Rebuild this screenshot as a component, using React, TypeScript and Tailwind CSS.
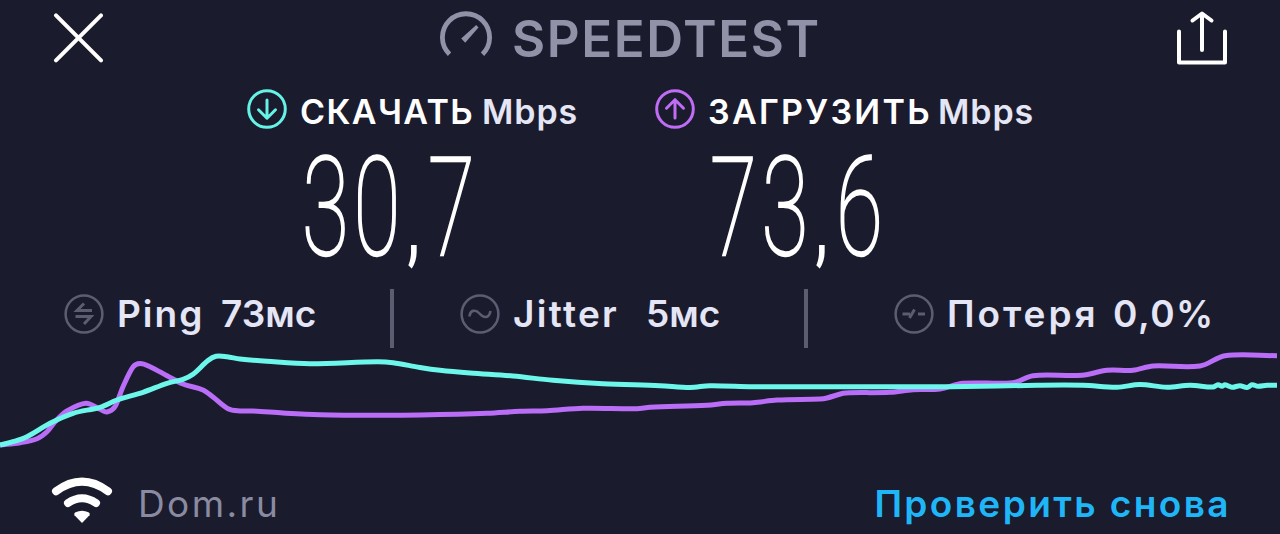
import type { ReactNode } from "react";

type Point = [number, number];

const downloadPoints: Point[] = [
  [0, 95], [13, 91.7], [27, 86.7], [50, 73.3], [73, 63.3], [100, 57.3], [117, 50], [143, 42.3],
  [167, 33.3], [183, 29.3], [193, 24.3], [208, 10.5], [216, 6.2], [227, 6.7], [240, 9], [267, 11.3],
  [310, 13.7], [377, 11.7], [393, 12.7], [420, 17.5], [440, 20.3], [470, 23], [513, 26],
  [553, 30.3], [603, 33.7], [660, 35.7], [690, 37.5], [710, 35.7], [753, 36.7], [850, 36.7],
  [950, 36.7], [1037, 35.3], [1083, 35.3], [1117, 37.3], [1140, 34.5], [1167, 37.3], [1190, 35.3],
  [1213, 37], [1218, 34.7], [1222, 36.3], [1225, 34.8], [1232, 37.3], [1240, 35.7], [1247, 37.5],
  [1252, 34.8], [1258, 36.3], [1267, 35.3], [1277, 35.3],
];

const uploadPoints: Point[] = [
  [0, 95], [20, 92.7], [37, 88.7], [47, 81.7], [55, 71.7], [67, 61], [86, 53.3], [100, 59.3],
  [107, 62], [115, 56.7], [123, 36.7], [133, 17], [140, 13.6], [150, 16.7], [167, 25.7], [183, 34],
  [203, 40], [213, 47], [228, 58.8], [240, 61], [253, 61], [283, 63], [320, 64.7], [377, 65.3],
  [420, 65], [487, 63.3], [520, 61.3], [547, 60.7], [583, 58.3], [637, 58.7], [650, 57.3],
  [707, 55.3], [727, 53.3], [753, 52.7], [777, 50], [820, 49], [827, 48], [843, 43.3], [850, 42.7],
  [890, 42.3], [913, 39.7], [940, 39], [963, 33.3], [1013, 32.7], [1033, 25.7], [1082, 25.3],
  [1107, 20.3], [1133, 20.3], [1153, 16], [1200, 16], [1225, 5.7], [1277, 5.7],
];

// Smooths the samples into bezier segments
const toPath = (points: Point[]) =>
  points.reduce((path, [x, y], i) => {
    if (i === 0) return `M${x} ${y}`;
    const [px, py] = points[i - 1];
    const [bx, by] = points[i - 2] ?? points[0];
    const [nx, ny] = points[i + 1] ?? points[i];
    const span = x - px;
    const startSlope = (y - by) / (x - bx || 1);
    const endSlope = (ny - py) / (nx - px || 1);
    return `${path}C${px + span / 3} ${py + (startSlope * span) / 3} ${x - span / 3} ${y - (endSlope * span) / 3} ${x} ${y}`;
  }, "");

const CloseIcon = () => (
  <svg width="50" height="50" viewBox="0 0 50 50" fill="none" stroke="currentColor" strokeWidth="4" strokeLinecap="round">
    <path d="M3 2.3 48 47.3M48 2.3 3 47.3" />
  </svg>
);

const GaugeIcon = () => (
  <svg width="54" height="46" viewBox="0 0 54 46" fill="none">
    <path d="M10.5 43.2A23.6 23.6 0 1 1 43.5 43.2" stroke="currentColor" strokeWidth="4.8" />
    <path d="M22.2 27.5 37.2 14 39.5 16.5 26.2 31.8Z" fill="currentColor" />
  </svg>
);

const ShareIcon = () => (
  <svg width="54" height="54" viewBox="0 0 54 54" fill="none" stroke="currentColor" strokeWidth="4" strokeLinecap="round" strokeLinejoin="round">
    <path d="M4 20.5V51.5H50V20.5M27 39V3M17.5 9.5 27 2.5 36.5 9.5" />
  </svg>
);

const WifiIcon = () => (
  <svg width="62" height="48" viewBox="0 0 62 48" fill="none">
    <path d="M5 15.2Q31-4 57 15.2" stroke="currentColor" strokeWidth="8" strokeLinecap="round" />
    <path d="M17 27Q31 17.5 45 27" stroke="currentColor" strokeWidth="8" strokeLinecap="round" />
    <path d="M31 47 23.5 39.2Q22.5 37.5 24.5 36.3 31 33 37.5 36.3 39.5 37.5 38.5 39.2Z" fill="currentColor" />
  </svg>
);

const SpeedIcon = ({ children }: { children: ReactNode }) => (
  <svg width="40" height="40" viewBox="0 0 40 40" fill="none" stroke="currentColor" strokeWidth="3" strokeLinecap="round" strokeLinejoin="round">
    <circle cx="20" cy="20" r="18.3" />
    {children}
  </svg>
);

const StatIcon = ({ children }: { children: ReactNode }) => (
  <svg width="40" height="40" viewBox="0 0 40 40" fill="none" stroke="currentColor" className="shrink-0 text-[#5d5d71]">
    <circle cx="20" cy="20" r="18.4" strokeWidth="2.5" />
    {children}
  </svg>
);

type SpeedProps = {
  icon: ReactNode;
  label: ReactNode;
  value: string;
};

const Speed = ({ icon, label, value }: SpeedProps) => {
  const [whole, fraction] = value.split(",");

  return (
    <div>
      <div className="flex h-[40px] items-center">
        {icon}
        <div className="ml-[13px] flex pt-[6px] text-[34px] leading-[40px] font-semibold whitespace-nowrap">
          {label}
          <span className="ml-[9px] tracking-[0.9px] text-[#e4e5f5]">Mbps</span>
        </div>
      </div>
      <div className="mt-[13px] ml-[55px] flex h-[132px] w-[320px] origin-left scale-x-[0.62] items-baseline font-[Roboto] text-[138px] leading-[132px] font-thin tracking-[7.6px] whitespace-nowrap [-webkit-text-stroke:2.4px_white]">
        <span>{whole}</span>
        <span className="w-[37px] shrink-0 pl-[4px] text-[86px] font-medium [-webkit-text-stroke:0px]">,</span>
        <span>{fraction}</span>
      </div>
    </div>
  );
};

export default function App() {
  return (
    <div className="flex h-[534px] w-[1280px] flex-col overflow-hidden bg-[#1b1b2e] font-[Inter,sans-serif] text-white">
      <header className="flex h-[89px] items-start justify-between pr-[51px] pl-[53px]">
        <button className="mt-[13px]">
          <CloseIcon />
        </button>
        <div className="flex w-[400px] text-[#9192a8]">
          <div className="mt-[11px]">
            <GaugeIcon />
          </div>
          <h1 className="mt-[9px] ml-[19px] text-[51px] leading-[60px] font-semibold tracking-[1.6px]">SPEEDTEST</h1>
        </div>
        <button className="mt-[11px]">
          <ShareIcon />
        </button>
      </header>

      <section className="flex h-[200px] pl-[247px]">
        <div className="w-[408px]">
          <Speed
            icon={
              <div className="text-[#65f3e5]">
                <SpeedIcon>
                  <path d="M20 11V29M11.5 20.8 20 29.3 28.5 20.8" />
                </SpeedIcon>
              </div>
            }
            label={<span className="w-[173px] tracking-[1.4px]">СКАЧАТЬ</span>}
            value="30,7"
          />
        </div>
        <Speed
          icon={
            <div className="text-[#bf6df5]">
              <SpeedIcon>
                <path d="M20 29V11M11.5 19.2 20 10.7 28.5 19.2" />
              </SpeedIcon>
            </div>
          }
          label={<span className="w-[221px] tracking-[2.3px]">ЗАГРУЗИТЬ</span>}
          value="73,6"
        />
      </section>

      <section className="flex h-[61px] text-[37px] leading-[50px] font-semibold whitespace-nowrap text-[#e4e5f5]">
        <div className="flex h-[50px] w-[390px] items-center pl-[64px]">
          <StatIcon>
            <path d="M28 16.5H13L20 9.5M11.5 22.5H27L20 30" strokeWidth="3" />
          </StatIcon>
          <span className="ml-[13px] w-[104px] tracking-[2px]">Ping</span>
          <span>73мс</span>
        </div>
        <div className="h-[59px] w-[4px] bg-[#5d5d71]" />
        <div className="flex h-[50px] w-[410px] items-center pl-[66px]">
          <StatIcon>
            <path d="M9.5 22.5C10 16 15.5 15 19.5 19.5S29 25 30.5 17" strokeWidth="2.6" />
          </StatIcon>
          <span className="ml-[13px] w-[133px] tracking-[2.3px]">Jitter</span>
          <span>5мс</span>
        </div>
        <div className="h-[59px] w-[4px] bg-[#5d5d71]" />
        <div className="flex h-[50px] items-center pl-[86px]">
          <StatIcon>
            <path d="M8.5 20H16M15.5 24 20.5 15.5M24 20H31" strokeWidth="3" />
          </StatIcon>
          <span className="ml-[13px] w-[166px] tracking-[3px]">Потеря</span>
          <span className="tracking-[1.5px]">0,0%</span>
        </div>
      </section>

      <svg width="1280" height="105" viewBox="0 0 1280 105" fill="none" strokeWidth="5" className="shrink-0">
        <path d={toPath(uploadPoints)} stroke="#ba6df6" />
        <path d={toPath(downloadPoints)} stroke="#6df7ea" />
      </svg>

      <footer className="flex h-[79px] items-start justify-between pr-[49px] pl-[51px] text-[37px] leading-[50px]">
        <div className="flex">
          <div className="mt-[21px]">
            <WifiIcon />
          </div>
          <span className="mt-[24px] ml-[25px] font-normal tracking-[2.4px] text-[#8a8ba1]">Dom.ru</span>
        </div>
        <button className="mt-[24px] font-semibold tracking-[2.4px] text-[#1fb6f8]">Проверить снова</button>
      </footer>
    </div>
  );
}
